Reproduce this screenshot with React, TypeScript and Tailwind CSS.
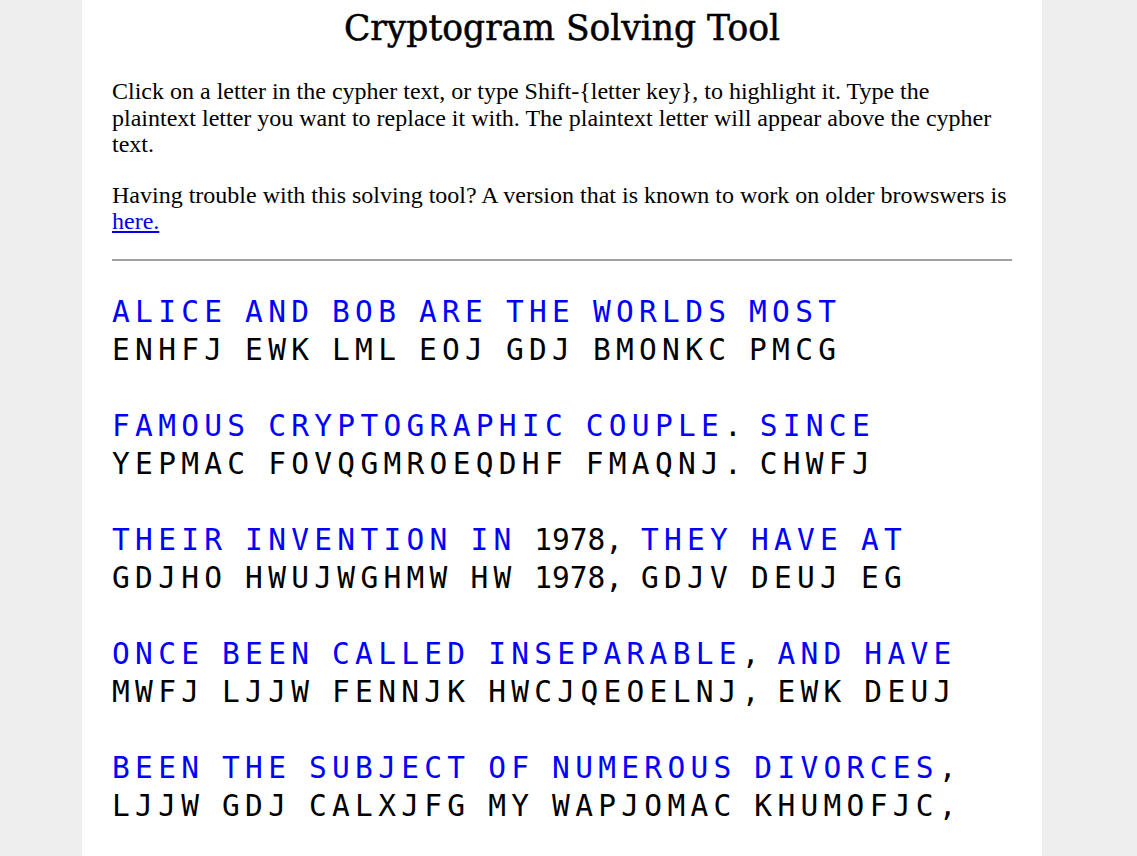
import React from 'react';

const blocks: [string, string][] = [
  ['ALICE AND BOB ARE THE WORLDS MOST', 'ENHFJ EWK LML EOJ GDJ BMONKC PMCG'],
  ['FAMOUS CRYPTOGRAPHIC COUPLE. SINCE', 'YEPMAC FOVQGMROEQDHF FMAQNJ. CHWFJ'],
  ['THEIR INVENTION IN 1978, THEY HAVE AT', 'GDJHO HWUJWGHMW HW 1978, GDJV DEUJ EG'],
  ['ONCE BEEN CALLED INSEPARABLE, AND HAVE', 'MWFJ LJJW FENNJK HWCJQEOELNJ, EWK DEUJ'],
  ['BEEN THE SUBJECT OF NUMEROUS DIVORCES,', 'LJJW GDJ CALXJFG MY WAPJOMAC KHUMOFJC,'],
];

// letters get extra spacing, digits/punctuation/spaces don't
const CodeLine = ({ text, plain }: { text: string; plain?: boolean }) => (
  <div className="leading-[38px] whitespace-pre">
    {text.split('').map((ch, i) =>
      /[A-Z]/.test(ch) ? (
        <span key={i} className={plain ? 'tracking-[5.3px] text-[#0000ff]' : 'tracking-[5.3px] text-black'}>
          {ch}
        </span>
      ) : (
        <span key={i} className="text-black">
          {ch}
        </span>
      )
    )}
  </div>
);

export default function App() {
  return (
    <div className="min-h-[856px] bg-[#eeeeee]">
      <div className="ml-[82px] w-[960px] min-h-[856px] bg-white px-[30px]">
        <h1
          className="text-center text-[34.5px] leading-[40px] pt-[8px] text-black [-webkit-text-stroke:0.5px_black]"
          style={{ fontFamily: '"DejaVu Serif", serif' }}
        >
          Cryptogram Solving Tool
        </h1>
        <div className="text-[24px] leading-[26.5px] text-black mt-[30px]" style={{ fontFamily: '"Liberation Serif", serif' }}>
          <p>
            Click on a letter in the cypher text, or type Shift-{'{'}letter key{'}'}, to highlight it. Type the
            plaintext letter you want to replace it with. The plaintext letter will appear above the cypher
            text.
          </p>
          <p className="mt-[24px]">
            Having trouble with this solving tool? A version that is known to work on older browswers is{' '}
            <a href="#" className="text-[#0000ee] underline">here.</a>
          </p>
        </div>
        <hr className="mt-[24px] border-0 border-t-2 border-[#a0a0a0]" />
        <div
          className="mt-[32px] text-[29.5px] text-black"
          style={{ fontFamily: '"DejaVu Sans Mono", monospace' }}
        >
          {blocks.map(([plain, cypher], i) => (
            <div key={i} className="mb-[38px]">
              <CodeLine text={plain} plain />
              <CodeLine text={cypher} />
            </div>
          ))}
        </div>
      </div>
    </div>
  );
}
